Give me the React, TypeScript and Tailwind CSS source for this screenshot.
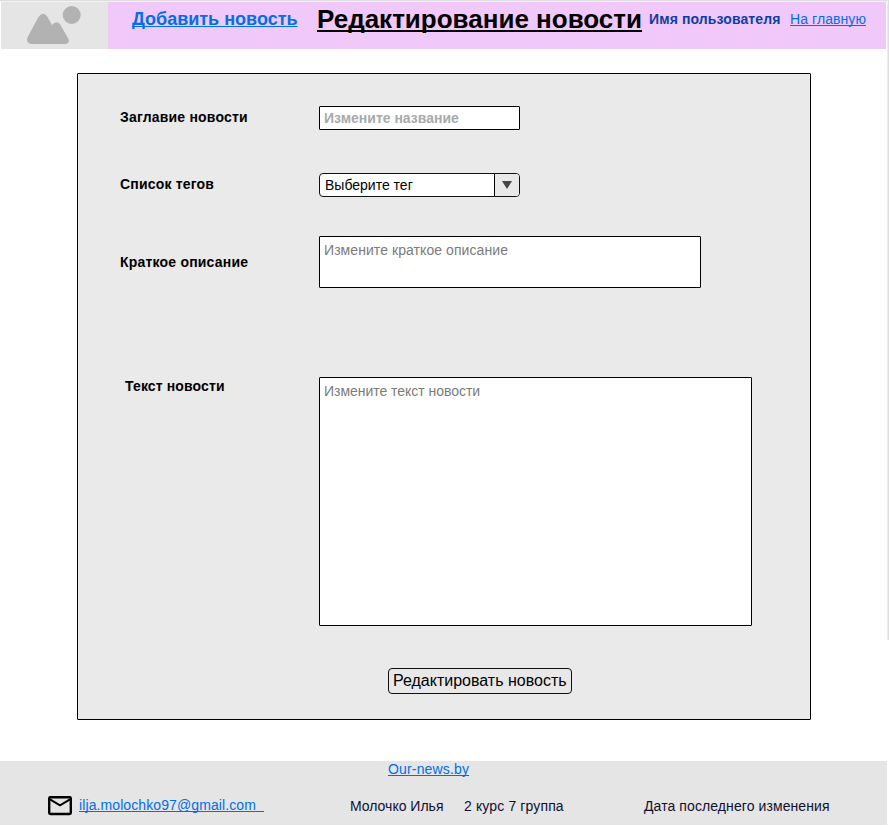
import React from "react";

function ImageMark() {
  return (
    <svg width="107" height="47" viewBox="1 2 107 47" className="block">
      <circle cx="71.7" cy="15" r="9" fill="#b2b2b2" />
      <path
        d="M27.4 37.6 L38.3 17.2 Q43 10.2 47.6 17 L52 25 L54 23.2 Q57.4 21 60.2 24.4 L68.5 39 Q70 43.4 65.5 44 L31 44 Q25.8 43.2 27.4 37.6 Z"
        fill="#b2b2b2"
      />
    </svg>
  );
}

function Envelope() {
  return (
    <svg width="24" height="20" viewBox="0 0 24 20" fill="none" className="block">
      <rect x="1.2" y="1.2" width="21.6" height="16.8" rx="1.2" stroke="#000" strokeWidth="2.4" />
      <path d="M2 3.4 L12 9.4 L22 3.4" stroke="#000" strokeWidth="2" />
    </svg>
  );
}

const link =
  "block shrink-0 text-[#006fe8] underline decoration-1 underline-offset-1 [text-decoration-skip-ink:none]";

function Header() {
  return (
    <header className="flex h-[47px] w-[886px] bg-[#f0c8fa]">
      <div className="w-px shrink-0 bg-white" />
      <div className="w-[107px] shrink-0 bg-[#e5e5e5]">
        <ImageMark />
      </div>
      <a href="#" className={`${link} ml-6 mt-[7px] w-[185px] text-[18px] leading-5 font-bold`}>
        Добавить новость
      </a>
      <h1 className="mt-px w-[332px] shrink-0 text-[26px] leading-[32px] font-bold text-black underline decoration-2 underline-offset-2 [text-decoration-skip-ink:none]">
        Редактирование новости
      </h1>
      <span className="mt-[9px] w-[141px] shrink-0 text-sm leading-4 font-bold tracking-[0.11px] text-[#0c3f9f]">
        Имя пользователя
      </span>
      <a href="#" className={`${link} mt-[9px] text-sm leading-4 tracking-[0.08px]`}>
        На главную
      </a>
    </header>
  );
}

const label = "w-[199px] shrink-0 text-sm leading-4 font-bold";

function EditForm() {
  return (
    <form className="ml-[77px] mt-6 flex h-[647px] w-[734px] flex-col rounded-[1px] border border-black bg-[#eaeaea] pl-[42px] text-black">
      <div className="mt-8 flex h-6">
        <label className={`${label} mt-[3px] tracking-[0.2px]`}>Заглавие новости</label>
        <div className="h-6 w-[201px] rounded-[1px] border border-black bg-white pl-1 pt-[3px] text-sm leading-4 font-bold text-[#a9a9a9]">
          Измените название
        </div>
      </div>
      <div className="mt-[43px] flex h-6">
        <label className={`${label} mt-[3px] tracking-[0.18px]`}>Список тегов</label>
        <div className="flex h-6 w-[201px] overflow-hidden rounded-[4px] border border-[#111] bg-white">
          <span className="w-[174px] pl-[5px] pt-[3px] text-sm leading-4">Выберите тег</span>
          <span className="flex flex-1 justify-center border-l border-black bg-[#e8e8e8] pt-[7px]">
            <svg width="10" height="8" viewBox="0 0 10 8">
              <path d="M0 0H10L5 8Z" fill="#444" />
            </svg>
          </span>
        </div>
      </div>
      <div className="mt-[39px] flex h-[52px]">
        <label className={`${label} mt-[18px] tracking-[0.2px]`}>Краткое описание</label>
        <div className="w-[382px] rounded-[1px] border border-black bg-white pl-1 pt-[5px] text-sm leading-4 tracking-[0.07px] text-[#7b7b7b]">
          Измените краткое описание
        </div>
      </div>
      <div className="mt-[89px] flex h-[249px]">
        <label className={`${label} mt-px pl-[5px] tracking-[0.13px]`}>Текст новости</label>
        <div className="w-[433px] rounded-[1px] border border-black bg-white pl-1 pt-[5px] text-sm leading-4 tracking-[-0.03px] text-[#7b7b7b]">
          Измените текст новости
        </div>
      </div>
      <button
        type="button"
        className="ml-[268px] mt-[42px] flex h-[26px] w-[184px] shrink-0 items-center rounded-[4px] border border-[#111] bg-[#e8e8e8] pl-1 text-base leading-6"
      >
        Редактировать новость
      </button>
    </form>
  );
}

function Footer() {
  return (
    <footer className="mt-[41px] h-16 w-[887px] bg-[#e5e5e5] text-sm leading-4 text-[#101030]">
      <a href="#" className={`${link} ml-[388px] w-[82px] tracking-[0.16px]`}>
        Our-news.by
      </a>
      <div className="flex pl-12 pt-[21px]">
        <div className="-mt-0.5 w-[31px] shrink-0">
          <Envelope />
        </div>
        <a href="#" className="-mt-px w-[271px] shrink-0">
          <span className={`${link} w-fit tracking-[0.1px]`}>{"ilja.molochko97@gmail.com\u00a0\u00a0"}</span>
        </a>
        <span className="w-[114px] shrink-0">Молочко Илья</span>
        <span className="w-[180px] shrink-0 tracking-[0.13px]">2 курс 7 группа</span>
        <span className="tracking-[0.09px]">Дата последнего изменения</span>
      </div>
    </footer>
  );
}

export default function App() {
  return (
    <div className="h-[826px] w-[889px] overflow-hidden bg-white font-['Liberation_Sans',Arial,sans-serif] whitespace-nowrap">
      <div className="flex">
        <div className="w-[887px] shrink-0">
          <div className="h-px bg-[#dedede]" />
          <div className="h-px bg-[#f2f2f2]" />
          <Header />
          <EditForm />
          <Footer />
        </div>
        <div className="h-[640px] w-px bg-[#ededed]" />
        <div className="h-[640px] w-px bg-[#dedede]" />
      </div>
    </div>
  );
}
